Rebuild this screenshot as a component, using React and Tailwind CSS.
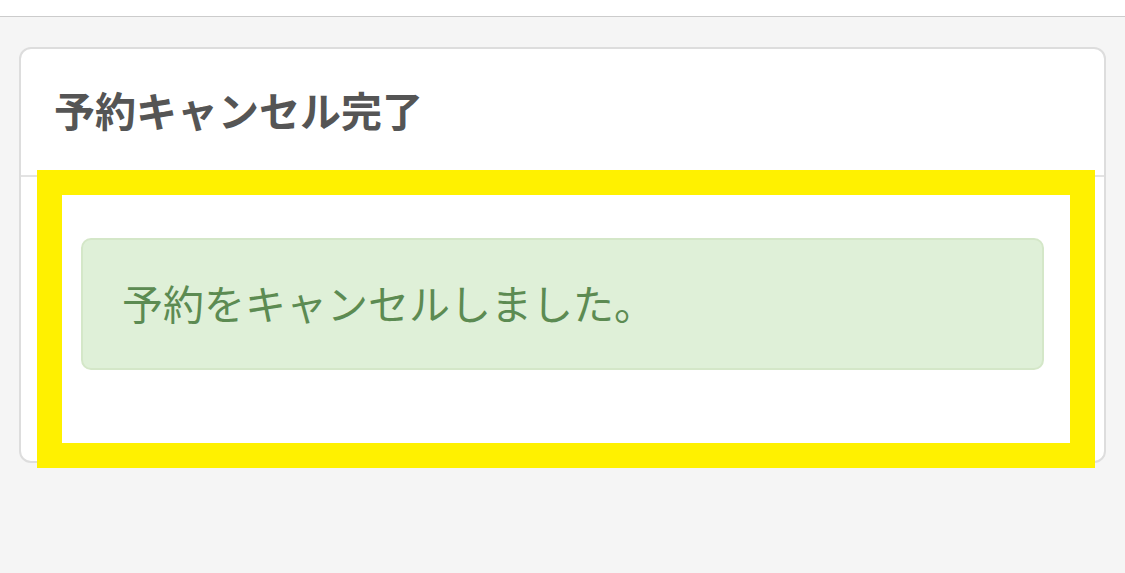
export default function App() {
  return (
    <div
      className="relative h-[573px] w-full overflow-hidden bg-[#f5f5f5]"
      style={{ fontFamily: '"Noto Sans CJK JP", "Noto Sans", sans-serif' }}
    >
      <div className="h-[17px] border-b border-[#cccccc] bg-white" />

      <div className="px-[19px] pt-[30px]">
        <div className="rounded-[12px] border-2 border-[#dddddd] bg-white">
          <div className="flex h-[128px] items-center border-b-2 border-[#e3e3e3] px-[33px] pb-[6px]">
            <h2 className="text-[41px] font-bold leading-none text-[#555555]">予約キャンセル完了</h2>
          </div>

          <div className="px-[60px] pb-[91px] pt-[61px]">
            <div className="flex h-[132px] items-center rounded-[10px] border-2 border-[#d4e7c8] bg-[#dff0d8] px-[39px] pb-[4px]">
              <p className="text-[41px] leading-none text-[#5c8b52]">予約をキャンセルしました。</p>
            </div>
          </div>
        </div>
      </div>

      {/* highlight frame laid over the card body */}
      <div className="pointer-events-none absolute left-[37px] top-[170px] h-[298px] w-[1058px] border-[25px] border-[#fff100]" />
    </div>
  );
}
